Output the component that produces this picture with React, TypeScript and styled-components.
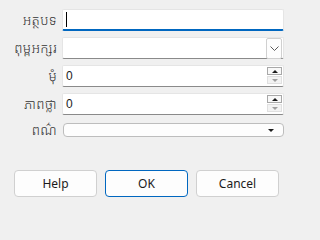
import React from 'react';
import styled, {createGlobalStyle} from 'styled-components';

const GlobalStyle = createGlobalStyle`
  html, body {
    margin: 0;
    padding: 0;
    background: #f0f0f0;
  }
  body {
    font-family: "Noto Sans", "Liberation Sans", sans-serif;
  }
`;

const Dialog = styled.div`
  width: 293px;
  height: 210px;
  box-sizing: border-box;
  padding: 9px 9px 0 0;
  background: #f0f0f0;
  display: flex;
  flex-direction: column;
`;

const Form = styled.div`
  display: grid;
  grid-template-columns: 57px 1fr;
  column-gap: 5px;
  row-gap: 6px;
  align-items: center;
`;

const Label = styled.div`
  font-family: "Khmer UI", "Noto Sans Khmer", "Noto Sans", "DejaVu Sans", sans-serif;
  font-size: 13.5px;
  font-weight: 300;
  letter-spacing: 0.3px;
  color: #333333;
  text-align: right;
  white-space: nowrap;
  line-height: 18px;
`;

const Field = styled.div<{ $focused?: boolean }>`
  position: relative;
  height: 22px;
  box-sizing: border-box;
  background: #ffffff;
  border: 1px solid #e5e5e5;
  border-bottom: ${p => (p.$focused ? '2px solid #0067c0' : '1px solid #8a8a8a')};
  border-radius: 2px;
  display: flex;
  align-items: center;
  padding-left: 3px;
  font-family: "Liberation Sans", sans-serif;
  font-size: 12px;
  color: #1b1b1b;
`;

const Caret = styled.span`
  width: 1px;
  height: 15px;
  background: #000;
`;

const DropButton = styled.div`
  position: absolute;
  right: 1px;
  top: 0;
  width: 16px;
  height: 21px;
  box-sizing: border-box;
  border: 1px solid #d0d0d0;
  border-radius: 2px;
  background: #fdfdfd;
  display: flex;
  align-items: center;
  justify-content: center;
`;

const Spin = styled.div`
  position: absolute;
  right: 1px;
  top: 1px;
  display: flex;
  flex-direction: column;
  gap: 1px;
`;

const SpinButton = styled.div<{ $disabled?: boolean }>`
  width: 15px;
  height: 8px;
  box-sizing: border-box;
  border: 1px solid ${p => (p.$disabled ? '#e0e0e0' : '#a8a8a8')};
  background: ${p => (p.$disabled ? '#f3f3f3' : '#f8f8f8')};
  display: flex;
  align-items: center;
  justify-content: center;
`;

const Arrow = styled.span<{ $down?: boolean; $disabled?: boolean }>`
  width: 0;
  height: 0;
  border-left: 3px solid transparent;
  border-right: 3px solid transparent;
  ${p => (p.$down ? 'border-top' : 'border-bottom')}: 3px solid ${p => (p.$disabled ? '#a0a0a0' : '#1b1b1b')};
`;

const ColorCombo = styled.div`
  height: 14px;
  margin-left: 1px;
  box-sizing: border-box;
  background: #fdfdfd;
  border: 1px solid #bdbdbd;
  border-radius: 4px;
  display: flex;
  align-items: center;
  justify-content: flex-end;
  padding-right: 9px;
`;

const ButtonRow = styled.div`
  margin-top: 31px;
  padding-left: 14px;
  display: flex;
  gap: 8px;
`;

const Button = styled.button<{ $primary?: boolean }>`
  width: 83px;
  height: 27px;
  box-sizing: border-box;
  background: #fdfdfd;
  border: 1px solid ${p => (p.$primary ? '#0067c0' : '#d0d0d0')};
  border-radius: 4px;
  font-family: "Segoe UI", "Noto Sans", "Liberation Sans", sans-serif;
  font-size: 12px;
  color: #1b1b1b;
  padding: 0;
`;

const App: React.FC = () => (
  <Dialog>
    <GlobalStyle/>
    <Form>
      <Label>អត្ថបទ</Label>
      <Field $focused><Caret/></Field>

      <Label>ពុម្ពអក្សរ</Label>
      <Field>
        <DropButton>
          <svg width="9" height="5" viewBox="0 0 9 5">
            <path d="M0.5 0.5 L4.5 4.5 L8.5 0.5" fill="none" stroke="#5a5a5a" strokeWidth="1"/>
          </svg>
        </DropButton>
      </Field>

      <Label>មុំ</Label>
      <Field>
        0
        <Spin>
          <SpinButton><Arrow/></SpinButton>
          <SpinButton $disabled><Arrow $down $disabled/></SpinButton>
        </Spin>
      </Field>

      <Label>ភាពថ្លា</Label>
      <Field>
        0
        <Spin>
          <SpinButton><Arrow/></SpinButton>
          <SpinButton $disabled><Arrow $down $disabled/></SpinButton>
        </Spin>
      </Field>

      <Label>ពណ៌</Label>
      <ColorCombo><Arrow $down/></ColorCombo>
    </Form>
    <ButtonRow>
      <Button>Help</Button>
      <Button $primary>OK</Button>
      <Button>Cancel</Button>
    </ButtonRow>
  </Dialog>
);

export default App;
